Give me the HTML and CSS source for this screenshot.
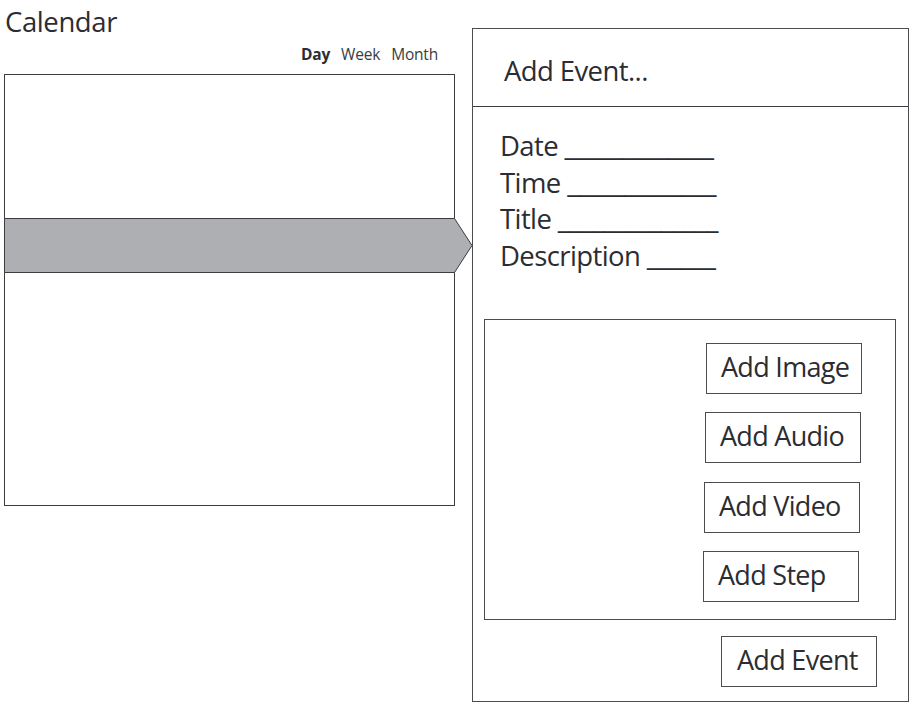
FILE: index.html
```html
<!DOCTYPE html>
<html>
<head>
<meta charset="utf-8">
<link rel="stylesheet" href="styles.css">
</head>
<body>
<div class="page">
  <section class="cal">
    <h1 class="cal-title">Calendar</h1>
    <nav class="tabs">
      <span class="tab active">Day</span>
      <span class="tab">Week</span>
      <span class="tab">Month</span>
    </nav>
    <div class="cal-box">
      <svg class="band" width="469" height="56" viewBox="0 0 469 56">
        <polygon points="0.5,0.5 450.5,0.5 468,27.5 450.5,54.5 0.5,54.5" fill="#aeafb2" stroke="#3a3c40" stroke-width="1"/>
      </svg>
    </div>
  </section>
  <section class="panel">
    <div class="panel-head">Add Event...</div>
    <div class="fields">
      <div class="field">Date _____________</div>
      <div class="field">Time _____________</div>
      <div class="field">Title ______________</div>
      <div class="field">Description ______</div>
    </div>
    <div class="media">
      <button class="btn b1">Add Image</button>
      <button class="btn b2">Add Audio</button>
      <button class="btn b3">Add Video</button>
      <button class="btn b4">Add Step</button>
    </div>
    <div class="footer">
      <button class="btn submit">Add Event</button>
    </div>
  </section>
</div>
</body>
</html>
```
FILE: styles.css
```css
html, body {
  margin: 0;
  padding: 0;
  background: #ffffff;
}
body {
  font-family: "Open Sans", "Noto Sans", sans-serif;
  color: #2b2d33;
}
.page {
  display: flex;
  align-items: flex-start;
  width: 920px;
  height: 714px;
}
.cal {
  width: 451px;
  margin-left: 4px;
  display: flex;
  flex-direction: column;
}
.cal-title {
  margin: 0;
  padding-left: 1px;
  font-weight: 400;
  font-size: 27.5px;
  line-height: 44px;
  letter-spacing: -0.4px;
}
.tabs {
  display: flex;
  justify-content: flex-end;
  gap: 11px;
  padding-right: 17px;
  font-size: 15.5px;
  line-height: 20px;
  height: 30px;
  letter-spacing: -0.2px;
  color: #3a3c42;
}
.tab.active {
  font-weight: 700;
  color: #2b2d33;
}
.cal-box {
  height: 430px;
  border: 1px solid #3a3c40;
  overflow: visible;
}
.band {
  display: block;
  margin-top: 143px;
  margin-left: -1px;
  overflow: visible;
}
.panel {
  margin-left: 17px;
  margin-top: 28px;
  width: 435px;
  height: 672px;
  border: 1px solid #4a4c50;
  display: flex;
  flex-direction: column;
}
.panel-head {
  box-sizing: border-box;
  height: 78px;
  border-bottom: 1px solid #3a3c40;
  padding-left: 31px;
  font-size: 27.5px;
  line-height: 84px;
  letter-spacing: -0.6px;
}
.fields {
  box-sizing: border-box;
  height: 212px;
  padding-left: 27px;
  padding-top: 21px;
  font-size: 27.5px;
  line-height: 36.5px;
  letter-spacing: -0.6px;
}
.field {
  white-space: pre;
}
.media {
  box-sizing: border-box;
  height: 301px;
  margin: 0 12px 0 11px;
  border: 1px solid #4a4c50;
  display: flex;
  flex-direction: column;
  align-items: flex-end;
  gap: 18px;
  padding-top: 23px;
}
.btn {
  font-family: "Open Sans", "Noto Sans", sans-serif;
  width: 156px;
  height: 51px;
  box-sizing: border-box;
  border: 1px solid #4a4c50;
  background: #ffffff;
  color: #2b2d33;
  font-size: 27px;
  letter-spacing: -0.7px;
  text-align: left;
  padding: 0 0 4px 14px;
  margin: 0;
  line-height: 44px;
  white-space: nowrap;
}
.b1 { margin-right: 33px; }
.b2 { margin-right: 34px; }
.b3 { margin-right: 35px; margin-top: 1px; }
.b4 { margin-right: 36px; }
.footer {
  display: flex;
  justify-content: flex-end;
  padding-top: 16px;
  padding-right: 31px;
}
.submit {
  padding-left: 15px;
}
```
